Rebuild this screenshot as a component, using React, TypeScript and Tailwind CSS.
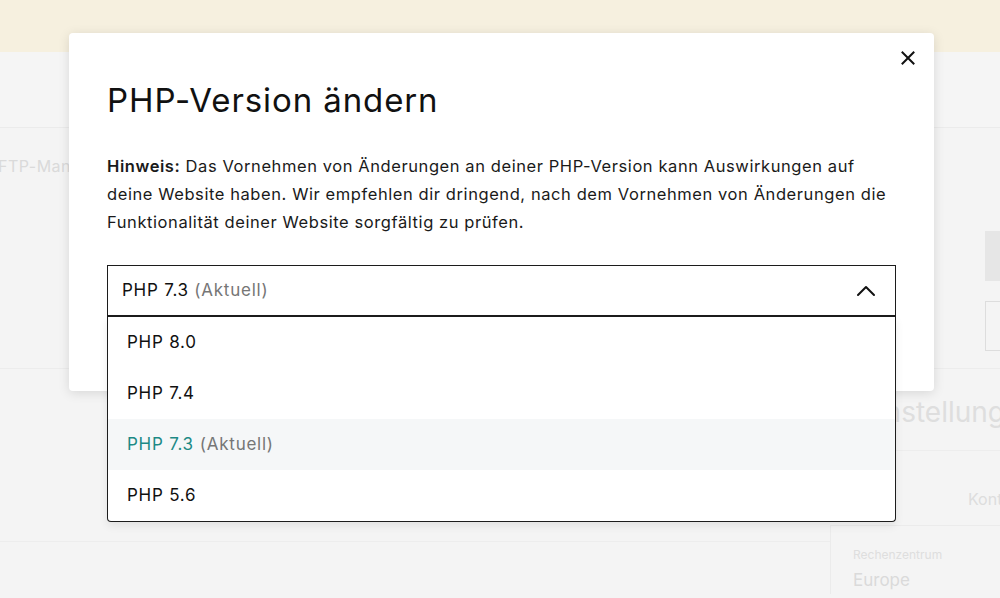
import React from 'react';

const versions = [
  { label: 'PHP 8.0', current: false },
  { label: 'PHP 7.4', current: false },
  { label: 'PHP 7.3', current: true },
  { label: 'PHP 5.6', current: false },
];

function CloseIcon() {
  return (
    <svg width="16" height="16" viewBox="0 0 16 16" fill="none" stroke="#111" strokeWidth="2" strokeLinecap="square">
      <path d="M2.5 2.5 13.5 13.5M13.5 2.5 2.5 13.5" />
    </svg>
  );
}

function ChevronUp() {
  return (
    <svg width="20" height="12" viewBox="0 0 20 12" fill="none" stroke="#111" strokeWidth="2" strokeLinecap="round" strokeLinejoin="round">
      <path d="M2 10 10 2l8 8" />
    </svg>
  );
}

function Backdrop() {
  return (
    <div className="absolute inset-0 flex flex-col bg-[#f4f4f4]">
      <div className="h-[52px] shrink-0 bg-[#f6f0df]" />
      <div className="h-[76px] shrink-0 border-b border-[#ebebeb] bg-[#f5f5f5]" />
      <div className="flex flex-1">
        <div className="flex w-[830px] flex-col">
          <div className="h-[241px] border-b border-[#ececec] pt-[26px]">
            <span className="-ml-[2px] text-[16px] tracking-[0.5px] text-[#dadada]">FTP-Manager</span>
          </div>
          <div className="h-[173px] border-b border-[#ededed]" />
        </div>
        <div className="flex w-[170px] flex-col pl-[18px]">
          <div className="pt-[103px] pl-[137px]">
            <div className="h-[50px] w-[40px] bg-[#e6e6e6]" />
            <div className="mt-[20px] h-[50px] w-[40px] border border-[#dddddd]" />
          </div>
          <div className="mt-[17px] border-t border-[#ececec] pt-[26px] pl-[13px] text-[28px] leading-[34px] whitespace-nowrap text-[#dedede]">
            Einstellungen
          </div>
          <div className="mt-[21px] border-t border-[#ededed] pt-[36px] pl-[120px] text-[16px] whitespace-nowrap text-[#dddddd]">Konto</div>
          <div className="mt-[14px] -ml-[18px] border-t border-l border-[#ebebeb] pt-[20px] pl-[22px]">
            <div className="text-[12px] text-[#dedede]">Rechenzentrum</div>
            <div className="mt-[4px] text-[17px] text-[#dadada]">Europe</div>
          </div>
        </div>
      </div>
    </div>
  );
}

export default function App() {
  return (
    <div className="relative h-[598px] w-[1000px] overflow-hidden font-['Inter',sans-serif] text-[#111]">
      <Backdrop />
      <div className="absolute top-[33px] left-[69px] w-[865px] rounded-[4px] bg-white px-[38px] pt-[47px] pb-[74px] shadow-[0_2px_12px_rgba(0,0,0,0.12)]">
        <button className="absolute top-[17px] right-[18px] flex h-[16px] w-[16px] items-center justify-center">
          <CloseIcon />
        </button>
        <h2 className="text-[33px] leading-[40px] font-normal tracking-[0.9px]">PHP-Version ändern</h2>
        <p className="mt-8 text-[16.5px] leading-[28px] tracking-[0.58px] text-[#1a1a1a]">
          <strong className="font-semibold">Hinweis:</strong> Das Vornehmen von Änderungen an deiner PHP-Version kann
          Auswirkungen auf deine Website haben. Wir empfehlen dir dringend, nach dem Vornehmen von Änderungen die
          Funktionalität deiner Website sorgfältig zu prüfen.
        </p>
        <div className="relative mt-[29px]">
          <div className="flex h-[52px] items-center justify-between border border-b-2 border-[#1c1c1c] pr-[19px] pl-[14px] text-[17px] tracking-[0.75px]">
            <span>
              PHP 7.3 <span className="text-[#767676]">(Aktuell)</span>
            </span>
            <ChevronUp />
          </div>
          <ul className="absolute top-[52px] right-0 left-0 rounded-b-[4px] border-x border-b border-[#1c1c1c] bg-white shadow-[0_4px_8px_rgba(0,0,0,0.08)]">
            {versions.map((v) => (
              <li
                key={v.label}
                className={
                  'flex h-[51px] items-center pl-[19px] text-[17px] tracking-[0.75px] ' +
                  (v.current ? 'bg-[#f5f7f8] text-[#1d8a86]' : 'text-[#111]')
                }
              >
                {v.label}
                {v.current && <span className="ml-[6px] text-[#767676]">(Aktuell)</span>}
              </li>
            ))}
          </ul>
        </div>
      </div>
    </div>
  );
}
